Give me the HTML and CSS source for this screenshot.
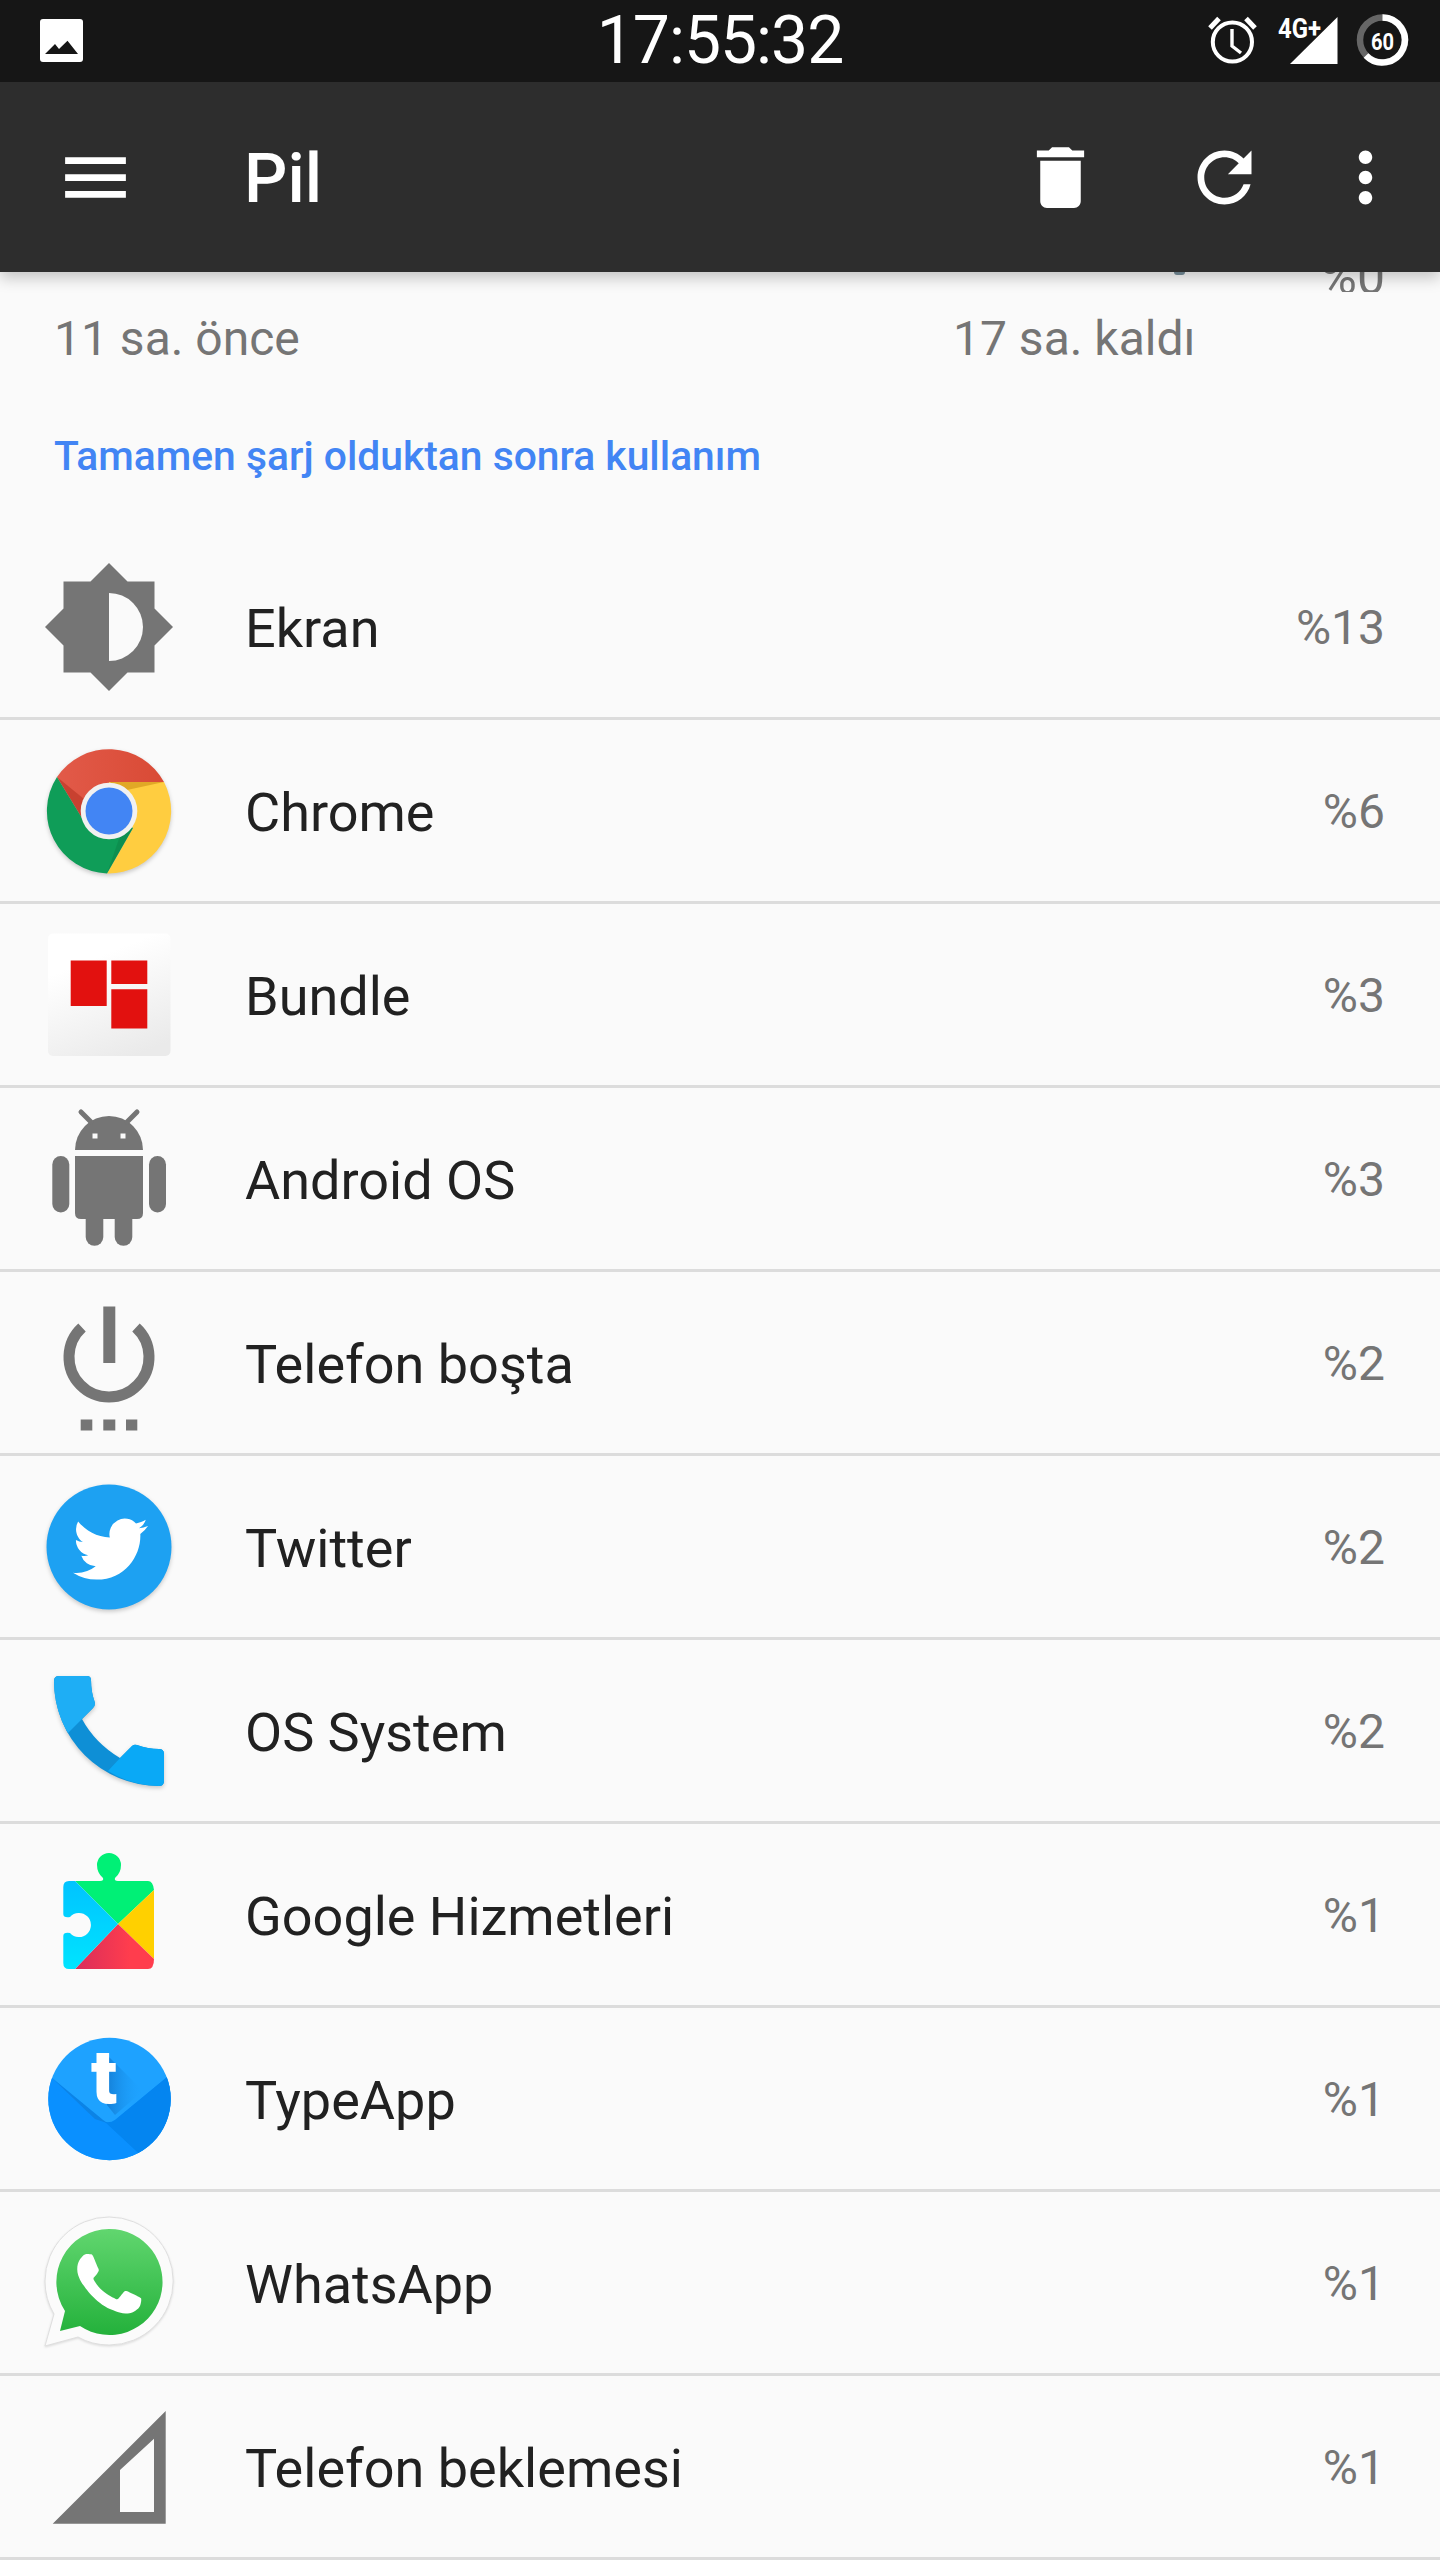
FILE: index.html
```html
<!DOCTYPE html>
<html lang="tr">
<head>
<meta charset="utf-8">
<title>Pil</title>
<link rel="stylesheet" href="styles.css">
</head>
<body>
<div class="screen">
  <header class="header">
    <div class="statusbar">
      <div class="status-left">
        <svg class="status-pic" viewBox="40 20 43 43"><rect x="40" y="20" width="43" height="43" rx="3" fill="#fff"/><path d="M45 55 L55 45 L59 50 L67.5 41.7 L78 55 Z" fill="#161616"/></svg>
      </div>
      <div class="status-time">17:55:32</div>
      <div class="status-right">
        <svg class="status-alarm" viewBox="1205 0 55 82"><circle cx="1232.4" cy="42" r="19.6" fill="none" stroke="#fff" stroke-width="4"/><path d="M1232 29 V46 L1241 53" fill="none" stroke="#fff" stroke-width="3.4"/><path d="M1210 28 L1219 18.5 M1255 28 L1246 18.5" stroke="#fff" stroke-width="5" fill="none"/></svg>
        <svg class="status-net" viewBox="1275 0 65 82"><path d="M1337.5 17 V64 H1290 Z" fill="#fff"/><text class="net-label" x="1278" y="38" textLength="43" lengthAdjust="spacingAndGlyphs">4G+</text></svg>
        <svg class="status-batt" viewBox="1355 0 55 82"><circle cx="1382.5" cy="40" r="22.5" fill="none" stroke="#666" stroke-width="6.5"/><path d="M1382.5 17.5 A22.5 22.5 0 1 1 1366 55.5" fill="none" stroke="#fff" stroke-width="6.5"/><text class="batt-label" x="1371" y="50" textLength="23" lengthAdjust="spacingAndGlyphs">60</text></svg>
      </div>
    </div>
    <div class="appbar">
      <svg class="bar-icon" viewBox="0 0 24 24"><path d="M3 18h18v-2H3v2zm0-5h18v-2H3v2zm0-7v2h18V6H3z"/></svg>
      <h1 class="title">Pil</h1>
      <svg class="bar-icon" viewBox="0 0 24 24"><path d="M6 19c0 1.1.9 2 2 2h8c1.1 0 2-.9 2-2V7H6v12zM19 4h-3.5l-1-1h-5l-1 1H5v2h14V4z"/></svg>
      <svg class="bar-icon refresh" viewBox="0 0 24 24"><path d="M17.65 6.35C16.2 4.9 14.21 4 12 4c-4.42 0-7.99 3.58-7.99 8s3.57 8 7.99 8c3.73 0 6.84-2.55 7.73-6h-2.08c-.82 2.33-3.04 4-5.65 4-3.31 0-6-2.69-6-6s2.69-6 6-6c1.66 0 3.14.69 4.22 1.78L13 11h7V4l-2.35 2.35z"/></svg>
      <svg class="bar-icon more" viewBox="0 0 24 24"><path d="M12 8c1.1 0 2-.9 2-2s-.9-2-2-2-2 .9-2 2 .9 2 2 2zm0 2c-1.1 0-2 .9-2 2s.9 2 2 2 2-.9 2-2-.9-2-2-2zm0 6c-1.1 0-2 .9-2 2s.9 2 2 2 2-.9 2-2-.9-2-2-2z"/></svg>
    </div>
  </header>

  <main class="content">
    <div class="peek"><span class="peek-mark"></span><span class="peek-value">%0</span></div>
    <div class="times"><span class="time-start">11 sa. önce</span><span>17 sa. kaldı</span></div>
    <h2 class="section">Tamamen şarj olduktan sonra kullanım</h2>

    <ul class="list">
      <li class="row">
        <svg class="icon" viewBox="0 -8 128 144"><path fill="#757575" d="M64 0 L82.5 18.5 H109.5 V45.5 L128 64 L109.5 82.5 V109.5 H82.5 L64 128 L45.5 109.5 H18.5 V82.5 L0 64 L18.5 45.5 V18.5 H45.5 Z"/><path fill="#fafafa" d="M64 30 A34 34 0 0 1 64 98 Z"/></svg>
        <span class="name">Ekran</span><span class="pct">%13</span>
      </li>
      <li class="row">
        <svg class="icon soft" viewBox="0 -8 128 144">
          <defs><linearGradient id="chromeRed" x1="0" x2="1"><stop offset="0" stop-color="#e25a49"/><stop offset="1" stop-color="#d94a35"/></linearGradient></defs>
          <path fill="url(#chromeRed)" d="M64 35 H119 A62.5 62.5 0 0 0 12 30 L37 71 L64 64 Z"/>
          <path fill="#ffcd40" d="M119 35 A62.5 62.5 0 0 1 62 126.5 L88 81 L64 64 V35 Z"/>
          <path fill="#0f9d58" d="M12 30 A62.5 62.5 0 0 0 62 126.5 L88 81 L64 64 L37 71 Z"/>
          <path fill="#b5301f" opacity=".55" d="M12 30 L37 71 L44 56 Z"/>
          <path fill="#c98a10" opacity=".55" d="M64 35 H119 L82 43 Z"/>
          <path fill="#0a6f3c" opacity=".3" d="M62 126.5 L88 81 L76 86 Z"/>
          <circle cx="64" cy="64" r="28.3" fill="#f1f1f1"/>
          <circle cx="64" cy="64" r="23.5" fill="#4285f4"/>
        </svg>
        <span class="name">Chrome</span><span class="pct">%6</span>
      </li>
      <li class="row">
        <svg class="icon" viewBox="0 -8 128 144">
          <defs><linearGradient id="bundleBg" x1=".3" y1="0" x2=".7" y2="1"><stop offset=".2" stop-color="#fff"/><stop offset="1" stop-color="#eaeaea"/></linearGradient></defs>
          <rect x="3" y="2.5" width="122.5" height="122.5" rx="5" fill="url(#bundleBg)"/>
          <path fill="#e2110f" d="M25.7 29.4 H61.7 V75 H25.7 Z M66.3 29.4 H102.3 V53 H66.3 Z M66.3 58.3 H102.3 V97.6 H66.3 Z"/>
        </svg>
        <span class="name">Bundle</span><span class="pct">%3</span>
      </li>
      <li class="row">
        <svg class="icon" viewBox="0 -8 128 144">
          <g fill="#757575">
            <path d="M30 35 A34 34 0 0 1 98 35 Z"/>
            <path d="M30 41 H98 V98 Q98 104 92 104 H36 Q30 104 30 98 Z"/>
            <rect x="7.3" y="41" width="17" height="56.5" rx="8.5"/>
            <rect x="104" y="41" width="17" height="56.5" rx="8.5"/>
            <path d="M40.7 100 H58.3 V122 A8.8 8.8 0 0 1 40.7 122 Z"/>
            <path d="M69.7 100 H87.3 V122 A8.8 8.8 0 0 1 69.7 122 Z"/>
          </g>
          <path d="M36 -3 L46 7 M92 -3 L82 7" stroke="#757575" stroke-width="5" stroke-linecap="round" fill="none"/>
          <rect x="47.5" y="18.5" width="5" height="5" fill="#fafafa"/>
          <rect x="75.5" y="18.5" width="5" height="5" fill="#fafafa"/>
        </svg>
        <span class="name">Android OS</span><span class="pct">%3</span>
      </li>
      <li class="row">
        <svg class="icon" viewBox="0 -8 128 144">
          <path d="M37 28.5 A40 40 0 1 0 91 28.5" fill="none" stroke="#757575" stroke-width="11"/>
          <path fill="#757575" d="M58.3 7.5 H70.3 V64 H58.3 Z M35.7 120.5 H47.3 V131.5 H35.7 Z M58.3 120.5 H70.3 V131.5 H58.3 Z M81 120.5 H92.3 V131.5 H81 Z"/>
        </svg>
        <span class="name">Telefon boşta</span><span class="pct">%2</span>
      </li>
      <li class="row">
        <svg class="icon soft" viewBox="0 -8 128 144">
          <circle cx="64" cy="64" r="62.5" fill="#1da1f2"/>
          <path transform="translate(28 28.6) scale(3.125)" fill="#fff" d="M23.953 4.57a10 10 0 01-2.825.775 4.958 4.958 0 002.163-2.723c-.951.555-2.005.959-3.127 1.184a4.92 4.92 0 00-8.384 4.482C7.69 8.095 4.067 6.13 1.64 3.162a4.822 4.822 0 00-.666 2.475c0 1.71.87 3.213 2.188 4.096a4.904 4.904 0 01-2.228-.616v.06a4.923 4.923 0 003.946 4.827 4.996 4.996 0 01-2.212.085 4.936 4.936 0 004.604 3.417 9.867 9.867 0 01-6.102 2.105c-.39 0-.779-.023-1.17-.067a13.995 13.995 0 007.557 2.209c9.053 0 13.998-7.496 13.998-13.985 0-.21 0-.42-.015-.63A9.935 9.935 0 0024 4.59z"/>
        </svg>
        <span class="name">Twitter</span><span class="pct">%2</span>
      </li>
      <li class="row">
        <svg class="icon soft" viewBox="0 -8 128 144">
          <path fill="#0e8fd6" d="M14 9 H42 Q46 9 46 13 Q46 25 50 36 Q50 39 48 41 L37 52 Q50 76 75 91 L87 79 Q89 77 92 78 Q103 82 114 82 Q119 82 119 87 V114 Q119 119 114 119 A105 105 0 0 1 9 14 Q9 9 14 9 Z"/>
          <path fill="#1eaef5" d="M14 9 H42 Q46 9 46 13 Q46 25 50 36 Q50 39 48 41 L23 66 Q9 42 9 14 Q9 9 14 9 Z"/>
          <path fill="#0aa9f6" d="M75 91 L87 79 Q89 77 92 78 Q103 82 114 82 Q119 82 119 87 V114 Q119 119 114 119 Q85 118 63 104 Z"/>
        </svg>
        <span class="name">OS System</span><span class="pct">%2</span>
      </li>
      <li class="row">
        <svg class="icon" viewBox="0 -8 128 144">
          <defs>
            <linearGradient id="playBlue" x1="0" y1="0" x2="0" y2="1"><stop offset="0" stop-color="#00c3ff"/><stop offset="1" stop-color="#00e4ff"/></linearGradient>
            <linearGradient id="playRed" x1="0" x2="1"><stop offset="0" stop-color="#d92d5b"/><stop offset=".7" stop-color="#ff3d4d"/></linearGradient>
          </defs>
          <path fill="#00f076" d="M30 30 H55 Q59 30 58 27 Q52 22 52 14 A12 12 0 1 1 76 14 Q76 22 70 27 Q69 30 73 30 H103 Q108 30 109 39 L73 73 Z"/>
          <path fill="#ffd000" d="M109 39 V108 L73 73 Z"/>
          <path fill="url(#playRed)" d="M30 118 L73 73 L109 108 Q109 118 103 118 Z"/>
          <path fill="url(#playBlue)" d="M30 30 H24 Q18.3 30 18.3 36 V63 Q18.3 67 25 66 A12 12 0 1 1 25 82 Q18.3 81 18.3 85 V112 Q18.3 118 24 118 H30 L73 73 Z"/>
        </svg>
        <span class="name">Google Hizmetleri</span><span class="pct">%1</span>
      </li>
      <li class="row">
        <svg class="icon" viewBox="0 -8 128 144">
          <defs>
            <clipPath id="typeClip"><circle cx="64.5" cy="64" r="61.2"/></clipPath>
            <linearGradient id="typeFold" x1="0" y1="0" x2="1" y2="0"><stop offset="0" stop-color="#1480d8"/><stop offset="1" stop-color="#1ea2ff" stop-opacity="0"/></linearGradient>
          </defs>
          <g clip-path="url(#typeClip)">
            <rect x="0" y="0" width="128" height="128" fill="#1ea2ff"/>
            <path fill="#0a90ff" d="M0 37 L58 85 Q64 90 70 85 L128 37 V128 H0 Z"/>
            <path fill="#0485f0" d="M128 37 L70 85 Q66 88 60 87 L104 128 H128 Z"/>
            <path fill="#0d75cc" opacity=".5" d="M7 43 L58 85 L62 88 L50 84 Z"/>
            <path fill="url(#typeFold)" d="M62 20 L98 56 L70 80 L62 70 Z"/>
          </g>
          <text class="type-t" x="46" y="68">t</text>
        </svg>
        <span class="name">TypeApp</span><span class="pct">%1</span>
      </li>
      <li class="row">
        <svg class="icon wa" viewBox="0 -8 128 144">
          <defs><linearGradient id="waGreen" x1="0" y1="0" x2="0" y2="1"><stop offset="0" stop-color="#61d66f"/><stop offset="1" stop-color="#24b13b"/></linearGradient></defs>
          <path fill="#fbfbfb" stroke="#dedede" stroke-width="1" d="M64.2 -2 A64 64 0 0 1 64.2 126 Q47 126 33 118 L0 127 L9 95 Q0 80 0 62 A64 64 0 0 1 64.2 -2 Z"/>
          <path fill="url(#waGreen)" d="M64 10 A53 53 0 1 1 35 107 L15 112 L20 92 A53 53 0 0 1 64 10 Z"/>
          <path transform="translate(.4 1.2) scale(5.3)" fill="#fff" d="M17.472 14.382c-.297-.149-1.758-.867-2.03-.967-.273-.099-.471-.148-.67.15-.197.297-.767.966-.94 1.164-.173.199-.347.223-.644.075-.297-.15-1.255-.463-2.39-1.475-.883-.788-1.48-1.761-1.653-2.059-.173-.297-.018-.458.13-.606.134-.133.298-.347.446-.52.149-.174.198-.298.298-.497.099-.198.05-.371-.025-.52-.075-.149-.669-1.612-.916-2.207-.242-.579-.487-.5-.669-.51-.173-.008-.371-.01-.57-.01-.198 0-.52.074-.792.372-.272.297-1.04 1.016-1.04 2.479 0 1.462 1.065 2.875 1.213 3.074.149.198 2.096 3.2 5.077 4.487.709.306 1.262.489 1.694.625.712.227 1.36.195 1.871.118.571-.085 1.758-.719 2.006-1.413.248-.694.248-1.289.173-1.413-.074-.124-.272-.198-.57-.347z"/>
        </svg>
        <span class="name">WhatsApp</span><span class="pct">%1</span>
      </li>
      <li class="row">
        <svg class="icon" viewBox="0 -8 128 144"><path fill="#757575" fill-rule="evenodd" d="M120.7 8 V120.7 H7.7 Z M109 35.7 L75 67 V109 H109 Z"/></svg>
        <span class="name">Telefon beklemesi</span><span class="pct">%1</span>
      </li>
    </ul>
  </main>
</div>
</body>
</html>
```

FILE: styles.css
```css
* { box-sizing: border-box; }

html, body {
  margin: 0;
  padding: 0;
  background: #fafafa;
}

.screen {
  width: 1440px;
  height: 2560px;
  overflow: hidden;
  display: flex;
  flex-direction: column;
  font-family: Roboto, "Noto Sans", sans-serif;
  background: #fafafa;
}

.header {
  position: relative;
  z-index: 2;
  flex: none;
  box-shadow: 0 6px 14px rgba(0, 0, 0, .22);
}

.statusbar {
  height: 82px;
  background: #161616;
  display: grid;
  grid-template-columns: 1fr auto 1fr;
  align-items: center;
  color: #fff;
}

.status-left {
  padding-left: 40px;
  display: flex;
  align-items: center;
}

.status-pic { width: 43px; height: 43px; margin-top: -1px; }

.status-time {
  font-size: 66px;
  font-weight: 400;
  line-height: 82px;
  letter-spacing: -1px;
}

.status-right {
  display: flex;
  justify-content: flex-end;
  gap: 15px;
  padding-right: 30px;
}

.status-alarm, .status-batt { width: 55px; height: 82px; display: block; }
.status-net { width: 65px; height: 82px; display: block; }

.net-label {
  font-family: Roboto, sans-serif;
  font-weight: 700;
  font-size: 28px;
  fill: #fff;
}

.batt-label {
  font-family: Roboto, sans-serif;
  font-weight: 700;
  font-size: 24px;
  fill: #fff;
}

.appbar {
  height: 190px;
  background: #2d2d2d;
  display: flex;
  align-items: center;
  padding: 0 34px 0 55px;
  color: #fff;
}

.bar-icon {
  width: 81px;
  height: 81px;
  flex: none;
  fill: #fff;
}

.refresh { margin-left: 83px; }
.more { margin-left: 60px; }

.title {
  flex: 1;
  margin: 0 0 0 108px;
  padding-top: 3px;
  font-size: 68px;
  font-weight: 500;
  line-height: 1;
}

.content {
  flex: 1;
  min-height: 0;
}

.peek {
  height: 20px;
  overflow: hidden;
  display: flex;
  justify-content: flex-end;
  align-items: flex-end;
  padding-right: 55px;
  position: relative;
}

.peek-value {
  font-size: 50px;
  line-height: 50px;
  color: #757575;
  margin-bottom: -10px;
}

.peek-mark {
  align-self: flex-start;
  width: 11px;
  height: 3px;
  border-radius: 0 0 6px 6px;
  background: #78909c;
  margin-right: 135px;
}

.times {
  display: flex;
  padding: 19px 55px 0 54px;
  font-size: 48px;
  line-height: 56px;
  color: #757575;
}

.time-start { width: 899px; }

.section {
  margin: 0;
  padding: 65px 54px 0;
  font-size: 40.8px;
  font-weight: 500;
  line-height: 48px;
  color: #4285f4;
}

.list {
  list-style: none;
  margin: 56px 0 0;
  padding: 0;
}

.row {
  height: 184px;
  display: flex;
  align-items: center;
  border-bottom: 3px solid #dcdcdc;
  padding: 0 55px 0 45px;
}

.icon {
  width: 128px;
  height: 144px;
  flex: none;
  overflow: visible;
}

.soft { filter: drop-shadow(0 2px 2px rgba(0, 0, 0, .2)); }
.wa { filter: drop-shadow(0 1px 1px rgba(0, 0, 0, .12)); }

.type-t {
  font-family: Roboto, sans-serif;
  font-weight: 900;
  font-size: 76px;
  fill: #fff;
}

.name {
  flex: 1;
  margin-left: 72px;
  padding-top: 4px;
  font-size: 54px;
  line-height: 64px;
  color: #212121;
}

.pct {
  padding-top: 2px;
  font-size: 48px;
  line-height: 56px;
  color: #757575;
}
```
